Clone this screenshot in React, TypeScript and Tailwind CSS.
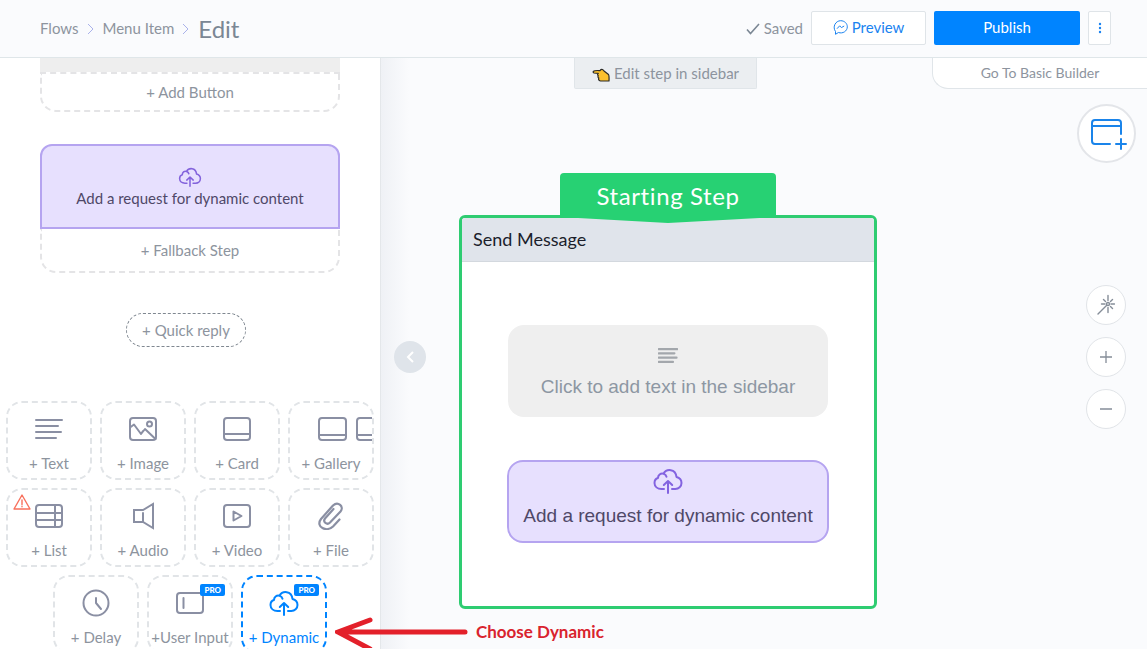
import React from 'react';

type IconProps = { className?: string };

const stroke = {
    fill: 'none',
    stroke: 'currentColor',
    strokeWidth: 2,
    strokeLinecap: 'round' as const,
    strokeLinejoin: 'round' as const,
};

const TextIcon: React.FC<IconProps> = ({ className }) => (
    <svg className={className} viewBox="0 0 28 20" {...stroke}>
        <path d="M1 1h26M1 7h22M1 13h25M1 19h20" />
    </svg>
);

const ImageIcon: React.FC<IconProps> = ({ className }) => (
    <svg className={className} viewBox="0 0 28 24" {...stroke}>
        <rect x="1" y="1" width="26" height="22" rx="3" />
        <circle cx="20.500" cy="7" r="2.500" />
        <path d="M1 10.500L5 7.500l7 9.500 4-5 10.500 10M14 14l-2 3" />
    </svg>
);

const CardIcon: React.FC<IconProps> = ({ className }) => (
    <svg className={className} viewBox="0 0 28 24" {...stroke}>
        <rect x="1" y="1" width="26" height="22" rx="3" />
        <path d="M1 17h26" />
    </svg>
);

const GalleryIcon: React.FC<IconProps> = ({ className }) => (
    <svg className={className} viewBox="0 0 55 24" {...stroke}>
        <rect x="2" y="1" width="27" height="22" rx="3" />
        <path d="M2 18h27M55 1H43a3 3 0 0 0-3 3v16a3 3 0 0 0 3 3h12M40 18h15" />
    </svg>
);

const ListIcon: React.FC<IconProps> = ({ className }) => (
    <svg className={className} viewBox="0 0 28 24" {...stroke}>
        <rect x="1" y="1" width="26" height="22" rx="3" />
        <path d="M1 9h26M1 16h26M20 1v22" />
    </svg>
);

const AudioIcon: React.FC<IconProps> = ({ className }) => (
    <svg className={className} viewBox="0 0 24 28" {...stroke} strokeLinejoin="miter">
        <path d="M3 8h9l10-6v24l-10-6H3zM12 11v9" />
    </svg>
);

const VideoIcon: React.FC<IconProps> = ({ className }) => (
    <svg className={className} viewBox="0 0 28 24" {...stroke}>
        <rect x="1" y="1" width="26" height="22" rx="3" />
        <path d="M10.500 7.500v9l8-4.500z" />
    </svg>
);

const FileIcon: React.FC<IconProps> = ({ className }) => (
    <svg className={className} viewBox="0 0 28 28" {...stroke} strokeWidth={2.2}>
        <path d="M22.500 17.500l-6.500 7C10 30.500-2 25 4 17L16 3.500C21-1 27.500 4.500 23.500 9.500L13 20.500c-3 3-7.500-.5-5-4l8.500-9.500" />
    </svg>
);

const DelayIcon: React.FC<IconProps> = ({ className }) => (
    <svg className={className} viewBox="0 0 28 28" {...stroke}>
        <circle cx="14" cy="14" r="12.500" />
        <path d="M14 9v5l5 6" />
    </svg>
);

const InputIcon: React.FC<IconProps> = ({ className }) => (
    <svg className={className} viewBox="0 0 28 22" {...stroke}>
        <rect x="1" y="1" width="26" height="20" rx="3" />
        <path d="M7.500 6v10" />
    </svg>
);

const CloudIcon: React.FC<IconProps> = ({ className }) => (
    <svg className={className} viewBox="0 0 30 26" {...stroke}>
        <path d="M11 21H8.500C4.500 21 1.500 18.500 1.500 15c0-2.800 1.800-4.500 3.500-5C5 7 7.500 5 10.500 5.700 13.500.5 22.500.5 23.500 9c3 .8 5 2.800 5 6 0 3.400-2.800 6-6.200 6H19M10.500 5.700c1.800.5 2.700 1.600 3 3.100M15 25V13.500M10.800 17L15 13l4.200 4" />
    </svg>
);

const WarningIcon: React.FC<IconProps> = ({ className }) => (
    <svg className={className} viewBox="0 0 18 16" {...stroke} strokeWidth={1.4}>
        <path d="M9 1L17 15H1zM9 6v4.500M9 12.300v.4" />
    </svg>
);

const HandIcon: React.FC<IconProps> = ({ className }) => (
    <svg className={className} viewBox="0 0 18 14" fill="#fbc02d" stroke="#2b2a26" strokeWidth="1.200" strokeLinejoin="round">
        <path d="M1.500 3.200C3 2.200 6 2.500 8 2.600 9 1.200 10.500.8 12 3l4.500 3.500c.8 1 .6 4.500.5 6.500H8.500C6.500 12.700 6.300 11 6.800 10 5.800 9.500 5.800 8.200 6.300 7.700 5.300 7.200 5.300 5.900 6.300 5.400L2 5C1 4.700.9 3.700 1.500 3.200z" />
    </svg>
);

const Chevron = () => (
    <svg className="h-3 w-2" viewBox="0 0 8 12" fill="none" stroke="#aab2ea">
        <path d="M1 1l5 5-5 5" />
    </svg>
);

type Tile = { label: string; icon: React.FC<IconProps>; size: string; warning?: boolean; pro?: boolean; active?: boolean };

const tiles: Tile[] = [
    { label: '+ Text', icon: TextIcon, size: 'w-7 h-5' },
    { label: '+ Image', icon: ImageIcon, size: 'w-7 h-6' },
    { label: '+ Card', icon: CardIcon, size: 'w-7 h-6' },
    { label: '+ Gallery', icon: GalleryIcon, size: 'w-[55px] h-6 ml-auto' },
    { label: '+ List', icon: ListIcon, size: 'w-7 h-6', warning: true },
    { label: '+ Audio', icon: AudioIcon, size: 'w-6 h-7' },
    { label: '+ Video', icon: VideoIcon, size: 'w-7 h-6' },
    { label: '+ File', icon: FileIcon, size: 'w-7 h-7' },
    { label: '+ Delay', icon: DelayIcon, size: 'w-7 h-7' },
    { label: '+User Input', icon: InputIcon, size: 'w-7 h-[22px]', pro: true },
    { label: '+ Dynamic', icon: CloudIcon, size: 'w-[30px] h-[26px]', pro: true, active: true },
];

const TileButton: React.FC<{ tile: Tile }> = ({ tile }) => {
    const Icon = tile.icon;
    return (
        <button
            type="button"
            className={`relative flex h-[79px] w-[86px] flex-col items-center rounded-2xl border-2 border-dashed pt-3 ${
                tile.active ? 'border-[#0084ff] text-[#0084ff]' : 'border-[#e1e4e7] text-[#8a8fa3]'
            }`}
        >
            <span className="flex h-7 w-full items-center justify-center">
                <Icon className={tile.size} />
            </span>
            <span className={`mt-2.5 text-[15px] leading-5 whitespace-nowrap ${tile.active ? '' : 'text-[#8d949e]'}`}>{tile.label}</span>
            {tile.warning && <WarningIcon className="absolute top-1 left-[5px] h-4 w-[18px] text-[#f8705c]" />}
            {tile.pro && (
                <span className="absolute top-[7px] right-1.5 rounded-[2px] bg-[#0084ff] px-1 text-[8px] leading-3 font-black text-white">PRO</span>
            )}
        </button>
    );
};

const Header = () => (
    <header className="flex h-[58px] shrink-0 items-center justify-between border-b border-[#dfe6e9] bg-[#fafbfd] pr-9 pl-10">
        <nav className="flex items-center gap-2">
            <a href="#flows">Flows</a>
            <Chevron />
            <a href="#menu-item">Menu Item</a>
            <Chevron />
            <h1 className="text-2xl text-[#7b8794]">Edit</h1>
        </nav>
        <div className="flex items-center gap-2 pb-0.5">
            <span className="flex items-center gap-1 pt-0.5">
                <svg className="h-3 w-[14px]" viewBox="0 0 14 12" fill="none" stroke="#7b8794" strokeWidth="1.600">
                    <path d="M1 6.500l3.500 4L13 1" />
                </svg>
                Saved
            </span>
            <button type="button" className="flex h-[34px] w-[115px] items-center justify-center gap-1 rounded-[2px] border border-[#dfe4e8] bg-white text-[#1a83f0]">
                <svg className="h-[15px] w-[15px]" viewBox="0 0 15 15" fill="none" stroke="currentColor" strokeLinejoin="round">
                    <path d="M2.500 14.300v-2.800C-.8 7 2.500.7 7.700.7c3.700 0 6.600 2.700 6.600 6.100 0 4.300-4.500 7.200-8.900 5.700zM4 8.700l2.700-2.900 1.700 1.800L11.200 6" />
                </svg>
                Preview
            </button>
            <button type="button" className="h-[34px] w-[146px] rounded-[2px] bg-[#0084ff] text-white">Publish</button>
            <button type="button" aria-label="More" className="flex h-[34px] w-[23px] items-center justify-center rounded-[2px] border border-[#dfe4e8] bg-white text-[#1a83f0]">
                <svg className="h-3 w-1" viewBox="0 0 4 12" fill="currentColor">
                    <circle cx="2" cy="2" r="1.200" />
                    <circle cx="2" cy="6" r="1.200" />
                    <circle cx="2" cy="10" r="1.200" />
                </svg>
            </button>
        </div>
    </header>
);

const Sidebar = () => (
    <aside className="flex w-[381px] shrink-0 flex-col items-center border-r border-[#e4e7ea] bg-white">
        <div className="w-[300px]">
            <div className="h-[14px] bg-[#eeeeee]" />
            <button type="button" className="h-10 w-full rounded-b-2xl border-2 border-dashed border-[#e4e4e6]">+ Add Button</button>
        </div>
        <div className="mt-8 w-[300px]">
            <button type="button" className="flex h-[85px] w-full flex-col items-center rounded-t-xl border-2 border-[#b5a4f0] bg-[#e7e0fe] pt-[21px] text-[#4f4868]">
                <CloudIcon className="h-5 w-6 text-[#8363dc]" />
                <span className="mt-px leading-5">Add a request for dynamic content</span>
            </button>
            <button type="button" className="h-11 w-full rounded-b-2xl border-2 border-t-0 border-dashed border-[#e4e4e6]">+ Fallback Step</button>
        </div>
        <button type="button" className="mt-10 mr-2 h-[34px] shrink-0 rounded-full border border-dashed border-[#7f8790] px-[15px]">+ Quick reply</button>
        <div className="mt-[54px] flex flex-wrap justify-center gap-2 px-1">
            {tiles.map(tile => (
                <TileButton key={tile.label} tile={tile} />
            ))}
        </div>
    </aside>
);

const StepNode = () => (
    <section className="absolute top-[115px] left-[78px] w-[418px]">
        <div className="flex flex-col items-center">
            <h2 className="h-[42px] w-[216px] rounded-t-[4px] bg-[#27d173] text-center text-2xl leading-[46px] tracking-wide text-white">Starting Step</h2>
        </div>
        <div className="relative h-[394px] rounded-md border-[3px] border-[#2ecc71] bg-white">
            <svg className="absolute -top-[3px] left-[98px] h-2 w-[216px]" viewBox="0 0 216 8" fill="#27d173">
                <path d="M0 0h216v2L108 8 0 2z" />
            </svg>
            <div className="h-11 rounded-t-[3px] border-b border-[#d3d8de] bg-[#e0e4eb] px-[11px] text-lg leading-[43px] text-[#1b1e2b]">Send Message</div>
            <div className="flex flex-col items-center pt-[63px] font-['Liberation_Sans',Arial,sans-serif] text-[19px] leading-6">
                <button type="button" className="flex h-[92px] w-80 flex-col items-center rounded-2xl bg-[#efefef] pt-[23px] text-[#8d97a3]">
                    <TextIcon className="h-[15px] w-5 stroke-3 text-[#a3a7ac]" />
                    <span className="mt-3">Click to add text in the sidebar</span>
                </button>
                <button type="button" className="mt-[43px] flex h-[83px] w-[322px] flex-col items-center rounded-2xl border-2 border-[#b5a4f0] bg-[#e7e0fe] pt-1.5 text-[#4f4868]">
                    <CloudIcon className="h-[26px] w-[30px] text-[#8363e0]" />
                    <span className="mt-2.5 whitespace-nowrap">Add a request for dynamic content</span>
                </button>
            </div>
        </div>
    </section>
);

const roundButton = 'flex h-10 w-10 items-center justify-center rounded-full border border-[#e1e4e8] bg-white text-[#858d98]';

const Canvas = () => (
    <main className="relative min-w-0 flex-1 bg-[#fafbfd]">
        <div className="absolute inset-y-0 left-0 w-7 bg-linear-to-r from-[#eff1f5] to-[#fafbfd]" />
        <StepNode />
        <div className="absolute top-0 left-[193px] flex h-[31px] w-[183px] items-center justify-center gap-1 rounded-b-[2px] border border-t-0 border-[#e0e5e9] bg-[#ebeef1]">
            <HandIcon className="mt-1 h-[14px] w-[18px]" />
            Edit step in sidebar
        </div>
        <a href="#basic" className="absolute top-0 right-0 flex h-[31px] w-[215px] items-center justify-center rounded-bl-2xl border-b border-l border-[#e0e5e9] bg-white text-sm">
            Go To Basic Builder
        </a>
        <button type="button" aria-label="Collapse sidebar" className="absolute top-[283px] left-[13px] flex h-8 w-8 items-center justify-center rounded-full bg-[#dfe4ea]">
            <svg className="h-3 w-2" viewBox="0 0 8 12" fill="none" stroke="#fff" strokeWidth="2">
                <path d="M7 1L2 6l5 5" />
            </svg>
        </button>
        <button type="button" aria-label="New step" className="absolute top-[46px] right-[11px] flex h-[59px] w-[59px] items-center justify-center rounded-full border-2 border-[#e3e5e9] bg-white pt-0.5 pl-1 text-[#1a84ea]">
            <svg className="h-[31px] w-9" viewBox="0 0 36 31" {...stroke}>
                <path d="M19 25H4a3 3 0 0 1-3-3V4a3 3 0 0 1 3-3h23a3 3 0 0 1 3 3v11M1 7h29M30 20v10M25 25h10" />
            </svg>
        </button>
        <div className="absolute top-[227px] right-[21px] flex flex-col gap-3">
            <button type="button" aria-label="Auto layout" className={roundButton}>
                <svg className="h-[22px] w-[18px]" viewBox="0 0 18 22" {...stroke} strokeWidth={1.4}>
                    <circle cx="11" cy="10" r="1.500" />
                    <path d="M11 1.500v5M11 13.500v5M4.500 10h3.500M14 10h3.500M6.500 5.500l2 2M15.500 5.500l-2 2M15.500 14.500l-2-2M9.500 11.500L1 20" />
                </svg>
            </button>
            <button type="button" aria-label="Zoom in" className={roundButton}>
                <svg className="h-3 w-3" viewBox="0 0 12 12" {...stroke} strokeWidth={1.3}>
                    <path d="M0 6h12M6 0v12" />
                </svg>
            </button>
            <button type="button" aria-label="Zoom out" className={roundButton}>
                <svg className="h-3 w-3" viewBox="0 0 12 12" {...stroke} strokeWidth={1.3}>
                    <path d="M0 6h12" />
                </svg>
            </button>
        </div>
        <div className="absolute top-[558px] left-[-46px] flex items-center gap-2 text-[17px] font-bold text-[#d9232e]">
            <svg className="h-8 w-[133px]" viewBox="0 0 133 32" fill="none" stroke="#e3202a" strokeWidth="5" strokeLinecap="round">
                <path d="M3 16h127M35 4L3 16l32 17" />
            </svg>
            Choose Dynamic
        </div>
    </main>
);

const App: React.FC = () => {
    return (
        <div className="flex h-screen flex-col overflow-hidden bg-[#fafbfd] font-['Lato',sans-serif] text-[15px] text-[#8d949e]">
            <Header />
            <div className="flex min-h-0 flex-1">
                <Sidebar />
                <Canvas />
            </div>
        </div>
    );
};

export default App;
